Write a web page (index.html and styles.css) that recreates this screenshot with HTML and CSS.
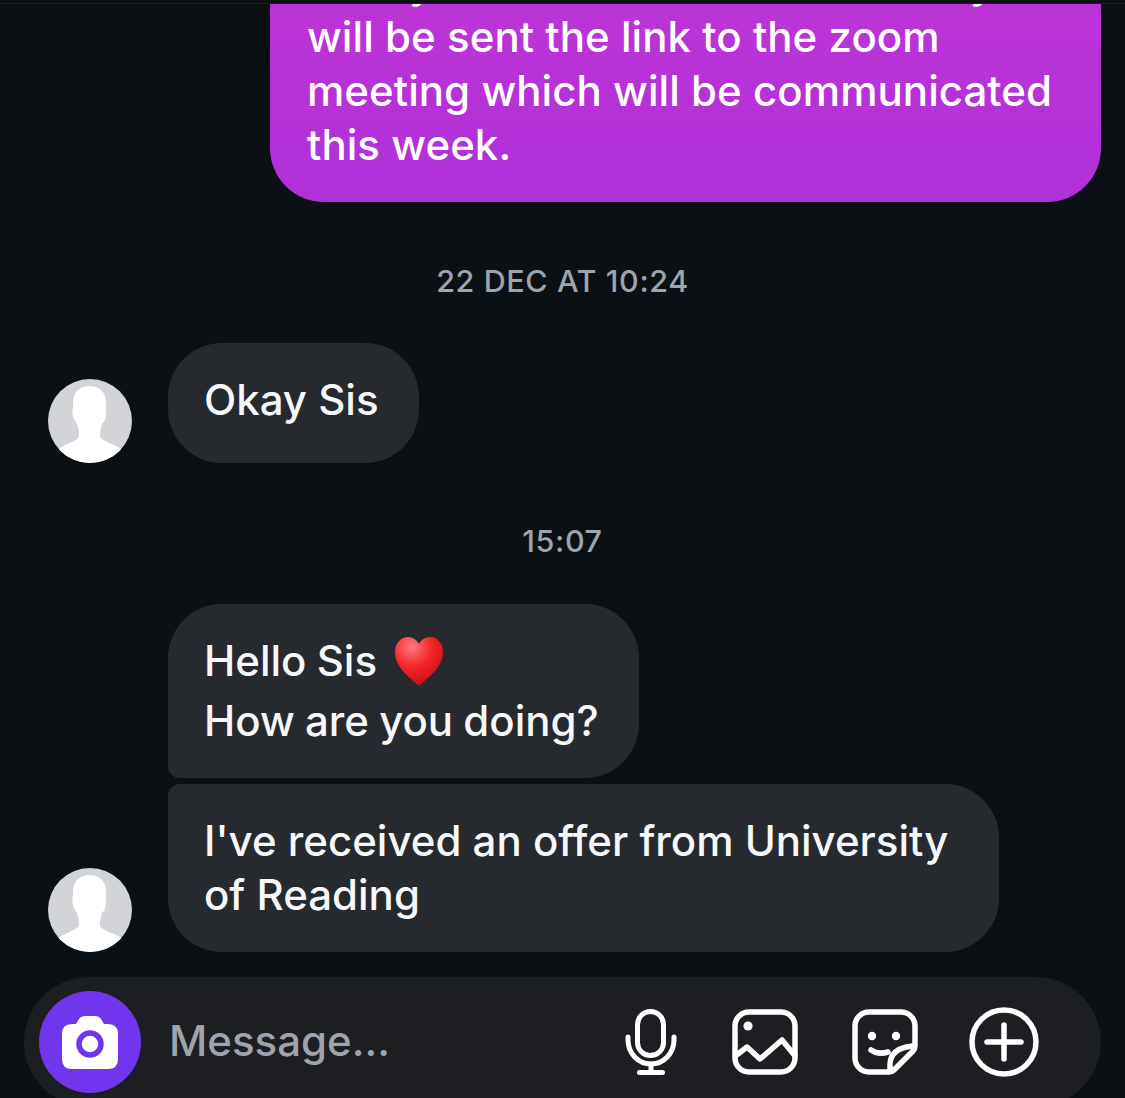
FILE: index.html
```html
<!DOCTYPE html>
<html lang="en">
<head>
    <meta charset="UTF-8">
    <meta name="viewport" content="width=device-width, initial-scale=1.0">
    <title>Messages</title>
    <link rel="stylesheet" href="styles.css">
</head>
<body>

    <svg class="defs" width="0" height="0">
        <defs>
            <symbol id="person" viewBox="0 0 84 84">
                <path d="M42 7C33 7 25 12 25 24C25 30 24 33 24.5 35C25 39 27 42 29 45C31 50 31 55 31 58C28 62 18 65 8 71L8 84H76V71C65 65 54 62 52 58C52 55 52 50 54 45C57 42 58 39 58 35C59 32 57 30 58 24C58 12 50 7 42 7Z" fill="#fff"/>
            </symbol>
            <radialGradient id="heartFill" cx="0.35" cy="0.2" r="0.9">
                <stop offset="0" stop-color="#ff7b7b"/>
                <stop offset="0.45" stop-color="#f5262a"/>
                <stop offset="1" stop-color="#bd0a10"/>
            </radialGradient>
        </defs>
    </svg>

    <div class="topline"></div>

    <main class="thread">
        <div class="bubble sent">
            Kindly note that on the final date you<br>
            will be sent the link to the zoom<br>
            meeting which will be communicated<br>
            this week.
        </div>

        <p class="stamp">22 DEC AT 10:24</p>

        <div class="row">
            <div class="avatar"><svg width="84" height="84"><use href="#person"/></svg></div>
            <div class="bubble received">Okay Sis</div>
        </div>

        <p class="stamp later">15:07</p>

        <div class="row no-avatar">
            <div class="bubble received first">
                <div class="heart-line">
                    <span>Hello Sis</span>
                    <svg class="heart" width="48" height="49" viewBox="0 0 48 49"><path d="M24 49C14 40 0 30 0 15C0 6 6 0 13 0C18 0 22 3 24 7C26 3 30 0 35 0C42 0 48 6 48 15C48 30 34 40 24 49Z" fill="url(#heartFill)"/></svg>
                </div>
                How are you doing?
            </div>
        </div>
        <div class="row">
            <div class="avatar"><svg width="84" height="84"><use href="#person"/></svg></div>
            <div class="bubble received last">I've received an offer from University<br>of Reading</div>
        </div>
    </main>

    <footer class="composer">
        <div class="camera">
            <svg width="56" height="54" viewBox="0 0 56 54">
                <path d="M10 9H14L17 4Q19 1 23 1H33Q37 1 39 4L42 9H46Q56 9 56 19V44Q56 54 46 54H10Q0 54 0 44V19Q0 9 10 9Z" fill="#fff"/>
                <circle cx="28" cy="29" r="11" fill="#fff" stroke="#7036ee" stroke-width="5.5"/>
            </svg>
        </div>
        <span class="placeholder">Message...</span>
        <div class="tools">
            <svg class="tool-mic" width="52" height="66" viewBox="0 0 52 66" fill="none" stroke="#fff" stroke-width="5" stroke-linecap="round">
                <rect x="12.5" y="2.5" width="26" height="44" rx="13"/>
                <path d="M3 28v3a23 24 0 0 0 46 0v-3"/>
                <path d="M26 55V63"/>
                <path d="M14.5 63.5H37.5"/>
            </svg>
            <svg width="66" height="66" viewBox="0 0 66 66" fill="none" stroke="#fff" stroke-width="5.5" stroke-linejoin="round">
                <rect x="3" y="3" width="60" height="60" rx="14"/>
                <circle cx="16" cy="17" r="4.6" fill="#fff" stroke="none"/>
                <path d="M2 48L15 38L28 50L50 31L64 48"/>
            </svg>
            <svg width="66" height="66" viewBox="0 0 66 66" fill="none" stroke="#fff" stroke-width="5.5" stroke-linecap="round" stroke-linejoin="round">
                <path d="M63 37V17A14 14 0 0 0 49 3H17A14 14 0 0 0 3 17V49A14 14 0 0 0 17 63H37Q40 63 42 61L61 42Q63 40 63 37Z"/>
                <path d="M38 62V56Q38 39 61 37"/>
                <path d="M19 41Q26 46 36 43"/>
                <circle cx="20" cy="27" r="4.2" fill="#fff" stroke="none"/>
                <circle cx="44" cy="27" r="4.2" fill="#fff" stroke="none"/>
            </svg>
            <svg class="tool-plus" width="70" height="70" viewBox="0 0 70 70" fill="none" stroke="#fff" stroke-width="5.5" stroke-linecap="round">
                <circle cx="35" cy="35" r="32"/>
                <path d="M18 35H52"/>
                <path d="M35 18V52"/>
            </svg>
        </div>
    </footer>

</body>
</html>
```

FILE: styles.css
```css
html, body {
    height: 100%;
}

body {
    margin: 0;
    height: 1098px;
    overflow: hidden;
    display: flex;
    flex-direction: column;
    background-color: #0b1014;
    color: #f6f7f9;
    font-family: Inter, "Liberation Sans", sans-serif;
    font-size: 42px;
    font-weight: 500;
    line-height: 54px;
}

.defs {
    position: absolute;
}

.topline {
    flex: none;
    height: 4px;
    box-sizing: border-box;
    border-bottom: 1px solid #1b1f23;
}

.thread {
    flex: 1;
    min-height: 0;
    overflow: hidden;
    display: flex;
    flex-direction: column;
    justify-content: flex-end;
    padding-bottom: 25px;
}

.bubble {
    flex: none;
    box-sizing: border-box;
    padding: 30px 40px 30px 36px;
    border-radius: 54px;
}

.sent {
    align-self: flex-end;
    width: 831px;
    margin-right: 24px;
    padding-left: 37px;
    color: #fff;
    background: linear-gradient(#c036d4, #b030d9);
    letter-spacing: 0.05px;
    white-space: nowrap;
}

.received {
    background-color: #26292e;
    min-height: 120px;
    white-space: nowrap;
}

.first {
    width: 471px;
    border-bottom-left-radius: 12px;
    word-spacing: -1px;
}

.last {
    border-top-left-radius: 12px;
    width: 831px;
}

.row {
    flex: none;
    display: flex;
    align-items: flex-end;
    gap: 36px;
    padding-left: 48px;
}

.no-avatar {
    padding-left: 168px;
    margin-bottom: 6px;
}

.avatar {
    flex: none;
    width: 84px;
    height: 84px;
    border-radius: 50%;
    overflow: hidden;
    background-color: #d2d4d8;
}

.avatar svg {
    display: block;
}

.stamp {
    flex: none;
    margin: 63px 0 46px;
    text-align: center;
    color: #9ea5ad;
    font-size: 30.5px;
    letter-spacing: 0.6px;
    line-height: 32px;
}

.later {
    margin: 62px 0 47px;
}

.heart-line {
    display: flex;
    align-items: center;
    gap: 18px;
    height: 54px;
    padding-bottom: 6px;
}

.heart {
    flex: none;
}

.composer {
    flex: none;
    display: flex;
    align-items: center;
    box-sizing: border-box;
    height: 130px;
    margin: 0 24px -9px;
    padding: 0 62px 0 15px;
    border-radius: 65px;
    background-color: #1c1e21;
}

.camera {
    flex: none;
    width: 102px;
    height: 102px;
    border-radius: 50%;
    background-color: #7036ee;
    display: flex;
    align-items: center;
    justify-content: center;
}

.placeholder {
    margin-left: 28px;
    padding-bottom: 2px;
    color: #9ea3ad;
}

.tools {
    margin-left: auto;
    display: flex;
    align-items: center;
    gap: 54px;
}

.tools svg {
    display: block;
}

.tool-mic {
    margin-right: 1px;
}

.tool-plus {
    margin-left: -3px;
}
```
